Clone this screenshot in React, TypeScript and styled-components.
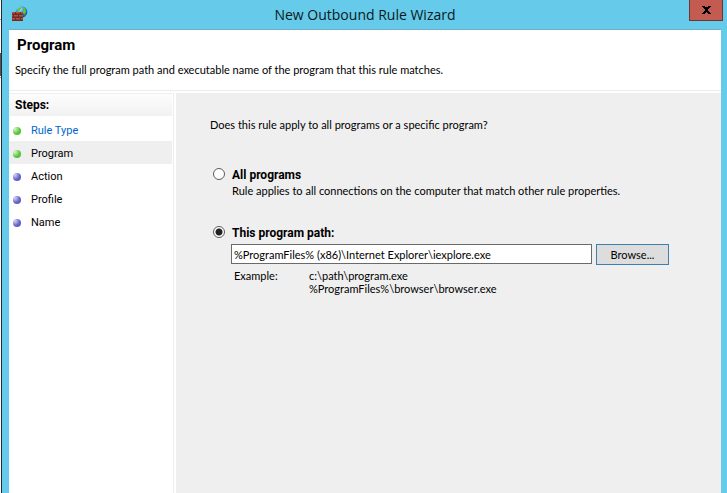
import React, { useState } from "react";
import styled, { createGlobalStyle } from "styled-components";

const GlobalStyle = createGlobalStyle`
  * { box-sizing: border-box; }
  body { margin: 0; background: #f4f4f4; }
  button, input { font: inherit; color: inherit; }
`;

const Desktop = styled.div`
  display: flex;
  min-height: 100vh;
  font: 11px/14px Lato, "Liberation Sans", sans-serif;
  color: #000;
`;

const Backdrop = styled.div`
  width: 1px;
  background: linear-gradient(
    #fafafa 19px, #a0a0a0 19px 20px, #fafafa 20px 53px,
    #555 53px 76px, #fafafa 76px 77px, #999 77px 78px, #fafafa 78px
  );
`;

const Frame = styled.div`
  flex: 1;
  min-width: 0;
  display: flex;
  flex-direction: column;
  padding: 0 6px 0 7px;
  border-left: 1px solid #222d33;
  background: #66cbea;
`;

const TitleBar = styled.header`
  display: grid;
  grid-template-columns: 32px 1fr 32px;
  height: 29px;
`;

const AppIcon = styled.svg`
  width: 16px;
  height: 16px;
  margin: 6px 0 0 3px;
`;

const WindowTitle = styled.h1`
  margin: 0;
  font: 14px/30px "Open Sans", "Noto Sans", sans-serif;
  text-align: center;
  color: #0a1a20;
`;

const CloseButton = styled.button`
  display: flex;
  align-items: center;
  justify-content: center;
  width: 34px;
  height: 21px;
  padding: 0;
  border: 1px solid #6a3632;
  border-top: 0;
  background: #c35b51;
`;

const Content = styled.div`
  flex: 1;
  display: flex;
  flex-direction: column;
  border-top: 1px solid #6eb0c5;
  background: #fff;
`;

const Intro = styled.section`
  height: 61px;
  padding: 5px 6px 0;
  border-bottom: 1px solid #ececec;
`;

const PageTitle = styled.h2`
  margin: 0 0 8px 2px;
  font: bold 15px/20px Roboto, "Liberation Sans", sans-serif;
`;

const Text = styled.p`
  margin: 0;
`;

const Body = styled.div`
  flex: 1;
  display: flex;
  gap: 2px;
  padding-top: 2px;
`;

const Sidebar = styled.nav`
  width: 165px;
  padding-right: 1px;
  border-right: 1px solid #ececec;
`;

const StepsHeading = styled.h3`
  margin: 0 0 2px;
  padding-left: 6px;
  border-top: 1px solid #f0f0f0;
  font: bold 12px/22px Roboto, "Liberation Sans", sans-serif;
  background: linear-gradient(#fdfdfd, #f1f1f1);
`;

const StepList = styled.ol`
  margin: 0;
  padding: 0;
  list-style: none;
  font-family: Roboto, "Liberation Sans", sans-serif;
`;

const StepItem = styled.li<{ $current?: boolean }>`
  display: flex;
  align-items: center;
  gap: 10px;
  height: 23px;
  padding: 2px 0 0 4px;
  background: ${(p) => (p.$current ? "#efefef" : "transparent")};
`;

const Bullet = styled.span<{ $done: boolean }>`
  width: 8px;
  height: 8px;
  border-radius: 50%;
  background: ${(p) =>
    p.$done
      ? "radial-gradient(circle at 25% 25%, #d8f5cc, #5ac83c 55%, #4fae38)"
      : "radial-gradient(circle at 25% 25%, #d3d3f5, #6464cc 55%, #5454b0)"};
`;

const StepLink = styled.a`
  color: #0066cc;
  text-decoration: none;
`;

const Panel = styled.main`
  flex: 1;
  min-width: 0;
  padding: 25px 52px 24px 34px;
  background: #efefef;
`;

const Options = styled.form`
  display: grid;
  grid-template-columns: 12px 1fr;
  column-gap: 6px;
  margin-top: 36px;
  padding-left: 3px;
`;

const Radio = styled.input`
  appearance: none;
  width: 12px;
  height: 12px;
  margin: 0;
  border: 1px solid #5c5c5c;
  border-radius: 50%;
  background: #fff;
  &:checked {
    background: radial-gradient(circle, #222 0 3px, #fff 4px);
  }
`;

const OptionLabel = styled.label`
  padding-left: 1px;
  font: bold 12px/14px Roboto, "Liberation Sans", sans-serif;
`;

const OptionBody = styled.div`
  grid-column: 2;
`;

const Description = styled(Text)`
  padding: 2px 0 28px 1px;
`;

const PathRow = styled.div`
  display: flex;
  align-items: flex-start;
  gap: 4px;
  margin-top: 4px;
`;

const PathInput = styled.input`
  flex: 1;
  min-width: 0;
  height: 20px;
  padding: 0 2px;
  border: 1px solid #6a6a6a;
  background: #fff;
`;

const BrowseButton = styled.button`
  width: 73px;
  height: 21px;
  padding: 0;
  border: 1px solid #3c7fb1;
  background: #dddddd;
`;

const Examples = styled.dl`
  display: grid;
  grid-template-columns: 75px 1fr;
  margin: 4px 0 0 3px;
  line-height: 13px;
`;

const ExampleTerm = styled.dt`
  grid-row: span 2;
`;

const ExampleValue = styled.dd`
  margin: 0;
`;

const steps = [
  { name: "Rule Type", done: true, link: true },
  { name: "Program", done: true, current: true },
  { name: "Action", done: false },
  { name: "Profile", done: false },
  { name: "Name", done: false },
];

const FirewallIcon = () => (
  <AppIcon viewBox="0 0 16 16" aria-hidden="true">
    <defs>
      <radialGradient id="globe" cx="35%" cy="25%" r="80%">
        <stop offset="0" stopColor="#d8f4ff" />
        <stop offset="0.4" stopColor="#3f9bdd" />
        <stop offset="1" stopColor="#123c9a" />
      </radialGradient>
    </defs>
    <circle cx="9.5" cy="6" r="5.8" fill="url(#globe)" />
    <path d="M4.400 4.400 7 1.400l2.400-.2-.8 2.200L6.500 5.500zM11 1.300l2.300 1.300.9 2.900-1.700 3-1.700-1.700.5-2z" fill="#59c43c" />
    <path d="M12.500 8.500l2-1.500-.8 2.800-1.700 1.400z" fill="#2a8b4a" />
    <path d="M0 6h11v9H0z" fill="#8e3f30" />
    <path d="M0 6.500h3M4 6.500h4M9 6.500h2M0 9.500h1M2 9.500h4M7 9.500h4M0 12.500h3M4 12.500h4M9 12.500h2" stroke="#b05543" />
    <path d="M0 8.500h11M0 11.500h11M0 14.500h11M3.500 6v2M8.500 6v2M1.500 9v2M6.500 9v2M3.500 12v2M8.500 12v2" stroke="#6e2c22" />
  </AppIcon>
);

export default function App() {
  const [choice, setChoice] = useState("path");
  const [path, setPath] = useState("%ProgramFiles% (x86)\\Internet Explorer\\iexplore.exe");

  return (
    <Desktop>
      <GlobalStyle />
      <Backdrop />
      <Frame>
        <TitleBar>
          <FirewallIcon />
          <WindowTitle>New Outbound Rule Wizard</WindowTitle>
          <CloseButton type="button" aria-label="Close">
            <svg width="9" height="8" viewBox="0 0 9 8" shapeRendering="crispEdges" aria-hidden="true">
              <path
                d="M0 0h3v1h3V0h3v1H8v1H7v1H6v2h1v1h1v1h1v1H6V7H5V6H4v1H3v1H0V7h1V6h1V5h1V3H2V2H1V1H0z"
                fill="#000"
              />
            </svg>
          </CloseButton>
        </TitleBar>
        <Content>
          <Intro>
            <PageTitle>Program</PageTitle>
            <Text>Specify the full program path and executable name of the program that this rule matches.</Text>
          </Intro>
          <Body>
            <Sidebar aria-label="Steps">
              <StepsHeading>Steps:</StepsHeading>
              <StepList>
                {steps.map((s) => (
                  <StepItem key={s.name} $current={s.current} aria-current={s.current ? "step" : undefined}>
                    <Bullet $done={s.done} />
                    {s.link ? <StepLink href="#rule-type">{s.name}</StepLink> : s.name}
                  </StepItem>
                ))}
              </StepList>
            </Sidebar>
            <Panel>
              <Text>Does this rule apply to all programs or a specific program?</Text>
              <Options onSubmit={(e) => e.preventDefault()}>
                <Radio type="radio" id="all" name="scope" checked={choice === "all"} onChange={() => setChoice("all")} />
                <OptionLabel htmlFor="all">All programs</OptionLabel>
                <OptionBody>
                  <Description>
                    Rule applies to all connections on the computer that match other rule properties.
                  </Description>
                </OptionBody>
                <Radio type="radio" id="path" name="scope" checked={choice === "path"} onChange={() => setChoice("path")} />
                <OptionLabel htmlFor="path">This program path:</OptionLabel>
                <OptionBody>
                  <PathRow>
                    <PathInput aria-label="Program path" value={path} onChange={(e) => setPath(e.target.value)} />
                    <BrowseButton type="button">Browse...</BrowseButton>
                  </PathRow>
                  <Examples>
                    <ExampleTerm>Example:</ExampleTerm>
                    <ExampleValue>c:\path\program.exe</ExampleValue>
                    <ExampleValue>%ProgramFiles%\browser\browser.exe</ExampleValue>
                  </Examples>
                </OptionBody>
              </Options>
            </Panel>
          </Body>
        </Content>
      </Frame>
    </Desktop>
  );
}
